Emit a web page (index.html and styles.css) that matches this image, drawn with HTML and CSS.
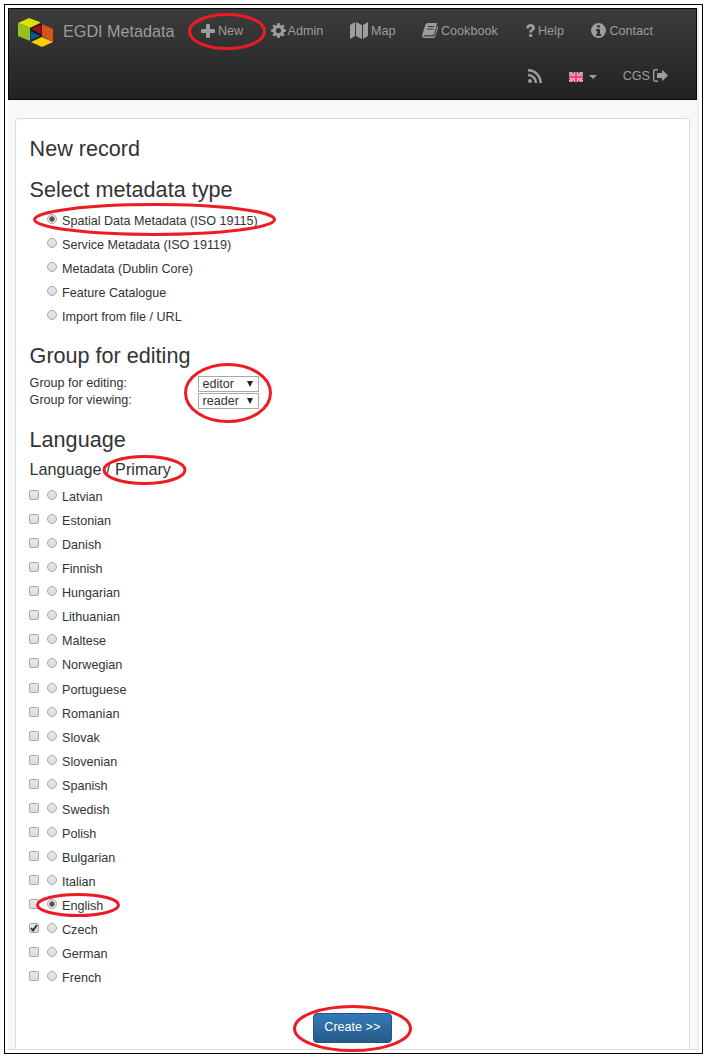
FILE: index.html
```
<!DOCTYPE html>
<html lang="en">
<head>
<meta charset="utf-8">
<title>EGDI Metadata</title>
<link rel="stylesheet" href="styles.css">
</head>
<body>
<div class="frame">
<div class="page">
<header class="navbar">
  <div class="brand">
    <svg class="logo" width="36" height="30" viewBox="0 0 36 30">
      <path fill="#dfe000" d="M0 5 11 0 23 4.500 12 10z"/>
      <path fill="#95c11f" d="M0 5 12 10V23L0 18z"/>
      <path fill="#1b1b1b" d="M12 10 24 5V18L12 23z"/>
      <path fill="#a01218" d="M13.500 10.500 23.300 6.700V16.500z"/>
      <path fill="#0057a4" d="M12.300 13 22.300 18 12.300 22z"/>
      <path fill="#d9531e" d="M24 6 35 11V24L24 18z"/>
      <path fill="#ffcc00" d="M13 24 24 19 35 24 24 29z"/>
    </svg>
    <span class="brand-name">EGDI Metadata</span>
  </div>
  <nav class="menus">
    <div class="menu main">
      <a class="item new"><svg class="icon" width="14" height="14" viewBox="0 0 14 14"><path d="M5 1q0-1 1-1h2q1 0 1 1v4h4q1 0 1 1v2q0 1-1 1H9v4q0 1-1 1H6q-1 0-1-1V9H1q-1 0-1-1V6q0-1 1-1h4z"/></svg><span>New</span></a>
      <a class="item admin"><svg class="icon" width="15" height="15" viewBox="0 0 16 16"><path fill-rule="evenodd" d="M6.800 0h2.400l.4 2.200 1.300.6 1.900-1.300 1.700 1.700-1.300 1.900.6 1.300 2.200.4v2.400l-2.200.4-.6 1.300 1.300 1.900-1.700 1.700-1.900-1.300-1.300.6-.4 2.200H6.800l-.4-2.200-1.300-.6-1.900 1.300-1.700-1.700 1.300-1.900-.6-1.300L0 9.200V6.800l2.200-.4.6-1.300L1.500 3.200l1.700-1.700 1.900 1.300 1.300-.6zM8 5.200a2.800 2.800 0 1 0 0 5.600 2.800 2.800 0 1 0 0-5.600z"/></svg><span>Admin</span></a>
      <a class="item map"><svg class="icon" width="18" height="17" viewBox="0 0 18 17"><path d="M0 3 5 0V14L0 17zM6 0 12 3V17L6 14zM13 3 18 0V14L13 17z"/></svg><span>Map</span></a>
      <a class="item book"><svg class="icon" width="16" height="15" viewBox="0 0 16 15"><path fill-rule="evenodd" d="M5.500 0H14q1.200.1.900 1.300L12 11.200q-.4 1.100-1.500 1.100H2.200q-1 .3-.2 1.200h9.200q1 0 1.400-1L15.300 3q1 .4.700 1.500L13.200 13.500q-.5 1.300-1.800 1.400H2Q0 14.500 0 12.500L3.500 1.500Q4.300.1 5.500 0zM6 3 5.700 4H12l.3-1zM5.300 5.500 5 6.500h6.300l.3-1z"/></svg><span>Cookbook</span></a>
      <a class="item help"><svg class="icon" width="9" height="13" viewBox="0 0 9 13"><path d="M0 3.500C1 1 2.700 0 4.700 0 7 0 9 1.600 9 3.700 9 6 6.200 6.500 6.100 8.500H3.200C3 6.300 5.800 5.500 5.800 4 5.800 2.300 3.300 2.200 2.200 5zM3.200 10h2.900v3H3.200z"/></svg><span>Help</span></a>
      <a class="item contact"><svg class="icon" width="15" height="15" viewBox="0 0 15 15"><path fill-rule="evenodd" d="M7.500 0a7.500 7.500 0 1 0 0 15 7.500 7.500 0 1 0 0-15zM6 2.200h3v2.300H6zM5 6h4v5h1v2H5v-2h1V8H5z"/></svg><span>Contact</span></a>
    </div>
    <div class="menu side">
      <a class="item rss"><svg class="icon" width="14" height="14" viewBox="0 0 14 14"><circle cx="2" cy="12" r="2"/><path d="M0 6A8 8 0 0 1 8 14M0 1.300A12.700 12.700 0 0 1 12.700 14" fill="none" stroke="#9d9d9d" stroke-width="2.500"/></svg></a>
      <a class="item lang"><svg class="flag" width="14" height="10" viewBox="0 0 14 10"><path fill="#4a4fa8" d="M0 0h14v10H0z"/><path stroke="#e8dcf0" stroke-width="2.400" d="M0 0 14 10M14 0 0 10"/><path stroke="#ee5570" d="M0 0 14 10M14 0 0 10"/><path stroke="#f5c4d0" stroke-width="4" d="M7 0V10M0 5H14"/><path stroke="#f8405c" stroke-width="2.400" d="M7 0V10M0 5H14"/></svg><i class="caret"></i></a>
      <a class="item user"><span>CGS</span><svg class="icon" width="15" height="13" viewBox="0 0 15 13"><path fill="none" stroke="#9d9d9d" stroke-width="1.400" d="M5 .7H2.200Q.7.700.7 2.200v8.600q0 1.500 1.500 1.500H5"/><path d="M4 4h5V.8L15 6.500 9 12.200V9H4z"/></svg></a>
    </div>
  </nav>
</header>
<main class="panel">
  <h2>New record</h2>
  <h2 class="type-title">Select metadata type</h2>
  <div class="types">
    <label class="row"><i class="radio on"></i>Spatial Data Metadata (ISO 19115)</label>
    <label class="row"><i class="radio"></i>Service Metadata (ISO 19119)</label>
    <label class="row"><i class="radio"></i>Metadata (Dublin Core)</label>
    <label class="row"><i class="radio"></i>Feature Catalogue</label>
    <label class="row"><i class="radio"></i>Import from file / URL</label>
  </div>
  <h2 class="group-title">Group for editing</h2>
  <div class="groups">
    <div class="group"><span class="group-name">Group for editing:</span><span class="select">editor<i class="arrow"></i></span></div>
    <div class="group"><span class="group-name">Group for viewing:</span><span class="select">reader<i class="arrow"></i></span></div>
  </div>
  <h2 class="lang-title">Language</h2>
  <h3>Language / Primary</h3>
  <div class="languages">
    <label class="row"><i class="check"></i><i class="radio"></i>Latvian</label>
    <label class="row"><i class="check"></i><i class="radio"></i>Estonian</label>
    <label class="row"><i class="check"></i><i class="radio"></i>Danish</label>
    <label class="row"><i class="check"></i><i class="radio"></i>Finnish</label>
    <label class="row"><i class="check"></i><i class="radio"></i>Hungarian</label>
    <label class="row"><i class="check"></i><i class="radio"></i>Lithuanian</label>
    <label class="row"><i class="check"></i><i class="radio"></i>Maltese</label>
    <label class="row"><i class="check"></i><i class="radio"></i>Norwegian</label>
    <label class="row"><i class="check"></i><i class="radio"></i>Portuguese</label>
    <label class="row"><i class="check"></i><i class="radio"></i>Romanian</label>
    <label class="row"><i class="check"></i><i class="radio"></i>Slovak</label>
    <label class="row"><i class="check"></i><i class="radio"></i>Slovenian</label>
    <label class="row"><i class="check"></i><i class="radio"></i>Spanish</label>
    <label class="row"><i class="check"></i><i class="radio"></i>Swedish</label>
    <label class="row"><i class="check"></i><i class="radio"></i>Polish</label>
    <label class="row"><i class="check"></i><i class="radio"></i>Bulgarian</label>
    <label class="row"><i class="check"></i><i class="radio"></i>Italian</label>
    <label class="row"><i class="check"></i><i class="radio on"></i>English</label>
    <label class="row"><i class="check"><svg class="tick" width="8" height="8" viewBox="0 0 8 8"><path d="M1 4.200 3 6.400 7 1" fill="none" stroke="#333" stroke-width="1.900"/></svg></i><i class="radio"></i>Czech</label>
    <label class="row"><i class="check"></i><i class="radio"></i>German</label>
    <label class="row"><i class="check"></i><i class="radio"></i>French</label>
  </div>
  <button class="create" type="button">Create &gt;&gt;</button>
</main>
</div>
</div>
<svg class="marks" width="706" height="1057" viewBox="0 0 706 1057">
  <ellipse cx="227" cy="31.500" rx="37.500" ry="17"/>
  <ellipse cx="154.500" cy="219.500" rx="120" ry="15"/>
  <ellipse cx="228" cy="393" rx="42.500" ry="28.500"/>
  <ellipse cx="144.500" cy="470" rx="40.500" ry="13.500"/>
  <ellipse cx="78" cy="905" rx="40.500" ry="10.500"/>
  <ellipse cx="352.500" cy="1028.500" rx="58" ry="22"/>
</svg>
</body>
</html>
```
FILE: styles.css
```
* { box-sizing: border-box; }
body {
  margin: 0;
  padding: 4px;
  height: 1057px;
  background: #fff;
  color: #333;
  font: 12.6px/18px "Liberation Sans", Arial, sans-serif;
  overflow: hidden;
}
.frame { width: 699px; height: 1050px; border: 1px solid #000; padding: 3px; }
.page {
  width: 691px;
  height: 1042px;
  background: #f8f8f8;
  border-right: 2px solid #eee;
  border-bottom: 1px solid #ddd;
}
.navbar {
  display: flex;
  height: 92px;
  border: 1px solid #080808;
  background: linear-gradient(#3c3c3c, #222);
  color: #9d9d9d;
}
.brand { display: flex; align-items: flex-start; width: 179px; padding: 9px 0 0 9px; }
.logo { flex: none; }
.brand-name { margin-left: 9px; font-size: 16.2px; line-height: 27px; white-space: nowrap; }
.menus { flex: 1; }
.menu { display: flex; height: 45px; }
.side { justify-content: flex-end; padding-right: 28px; }
.item { display: flex; align-items: center; height: 43px; white-space: nowrap; }
.icon { flex: none; fill: #9d9d9d; }
.new { margin-left: 13px; gap: 3px; width: 69.500px; }
.admin { gap: 2px; width: 79.500px; }
.map { gap: 3px; width: 72px; }
.book { gap: 3px; width: 104px; }
.help { gap: 3px; width: 65px; }
.contact { gap: 3.500px; }
.rss { width: 41px; }
.lang { gap: 6px; width: 54px; }
.flag { margin-top: 2px; }
.caret { margin-top: 2px; border: 4px solid transparent; border-top-color: #9d9d9d; border-bottom: 0; width: 0; height: 0; }
.user { gap: 3px; }
.panel {
  display: flex;
  flex-direction: column;
  width: 675px;
  height: 931px;
  margin: 18px 0 0 7px;
  padding: 17.5px 14px 0 13.6px;
  background: #fff;
  border: 1px solid #ddd;
  border-bottom: 0;
  border-radius: 4px 4px 0 0;
}
h2 { margin: 0; font-size: 21.6px; font-weight: 400; line-height: 24px; }
h3 { margin: 8px 0 0; font-size: 16.2px; font-weight: 400; line-height: 18px; }
.type-title { margin-top: 17px; }
.types { margin-top: 7px; padding-left: 17.4px; }
.row { display: flex; height: 24.08px; line-height: 24.08px; }
.radio, .check {
  flex: none;
  width: 10px;
  height: 10px;
  margin-top: 5px;
  border: 1px solid #a9a9a9;
  background: linear-gradient(#e9e9e9, #dcdcdc);
}
.radio { border-radius: 50%; margin-right: 5px; }
.on { background: radial-gradient(circle, #555 0 2.300px, #e4e4e4 3px); }
.check { margin-left: -.6px; margin-right: 8px; border-radius: 2px; }
.tick { display: block; }
.group-title { margin-top: 15px; }
.groups { margin-top: 7.500px; }
.group { display: flex; height: 17px; line-height: 17px; }
.group-name { width: 168.4px; }
.select {
  display: flex;
  align-items: center;
  justify-content: space-between;
  width: 61px;
  height: 16px;
  margin-top: .5px;
  padding: 0 5px 0 3.500px;
  border: 1px solid #a9a9a9;
  background: #fff;
  line-height: 14px;
}
.arrow { width: 0; height: 0; border: 3.500px solid transparent; border-top: 6px solid #222; border-bottom: 0; }
.lang-title { margin-top: 18.500px; }
.languages { margin-top: 7px; }
.create {
  align-self: center;
  width: 79px;
  height: 30px;
  margin-top: 22px;
  padding: 0 0 2px;
  border: 1px solid #245580;
  border-radius: 4px;
  background: linear-gradient(#337ab7, #265a88);
  color: #fff;
  font: 12.6px "Liberation Sans", Arial, sans-serif;
}
.marks { position: absolute; left: 0; top: 0; fill: none; stroke: #ed1c24; stroke-width: 3; pointer-events: none; }
```
